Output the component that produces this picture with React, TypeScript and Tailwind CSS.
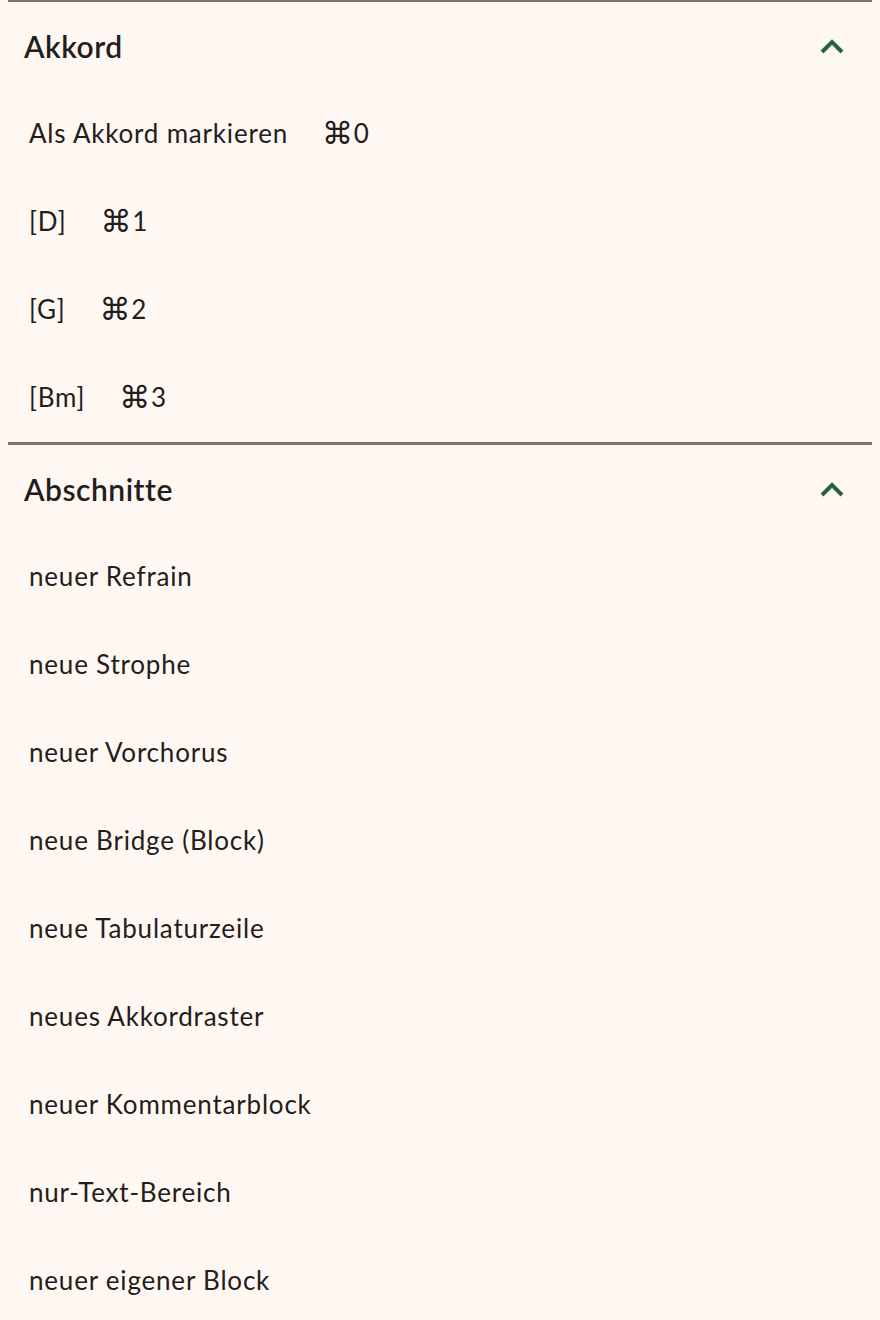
interface Entry {
  label: string
  key?: string
}

interface Section {
  title: string
  entries: Entry[]
}

const sections: Section[] = [
  {
    title: "Akkord",
    entries: [
      { label: "Als Akkord markieren", key: "0" },
      { label: "[D]", key: "1" },
      { label: "[G]", key: "2" },
      { label: "[Bm]", key: "3" },
    ],
  },
  {
    title: "Abschnitte",
    entries: [
      { label: "neuer Refrain" },
      { label: "neue Strophe" },
      { label: "neuer Vorchorus" },
      { label: "neue Bridge (Block)" },
      { label: "neue Tabulaturzeile" },
      { label: "neues Akkordraster" },
      { label: "neuer Kommentarblock" },
      { label: "nur-Text-Bereich" },
      { label: "neuer eigener Block" },
    ],
  },
]

function Chevron() {
  return (
    <svg width="26" height="17" viewBox="0 0 26 17" fill="none" className="text-[#236446]">
      <polyline points="3,14 13,4 23,14" stroke="currentColor" strokeWidth="4" strokeLinejoin="miter" />
    </svg>
  )
}

export default function App() {
  return (
    <div className="min-h-[1320px] bg-[#fff7f1] px-2 font-['Lato','Noto_Sans',sans-serif] text-[#1f201c]">
      {sections.map((section, i) => (
        <section
          key={section.title}
          className={`border-[#7b756d] ${i === 0 ? "border-t-2" : "border-t-[3px]"}`}
        >
          {/* Collapsible header */}
          <button className="flex h-[88px] w-full items-center justify-between pl-4 pr-[27px]">
            <span className="text-[30px] font-semibold tracking-[0.5px]">{section.title}</span>
            <Chevron />
          </button>

          <ul>
            {section.entries.map((entry) => (
              <li key={entry.label} className="flex h-[88px] items-center gap-[34px] pb-0.5 pl-[21px] text-[26px] tracking-[0.8px]">
                <span>{entry.label}</span>
                {entry.key && (
                  <span className="flex items-center">
                    <span className="font-['DejaVu_Sans',sans-serif] text-[31px] leading-none">⌘</span>
                    <span>{entry.key}</span>
                  </span>
                )}
              </li>
            ))}
          </ul>
        </section>
      ))}
    </div>
  )
}
